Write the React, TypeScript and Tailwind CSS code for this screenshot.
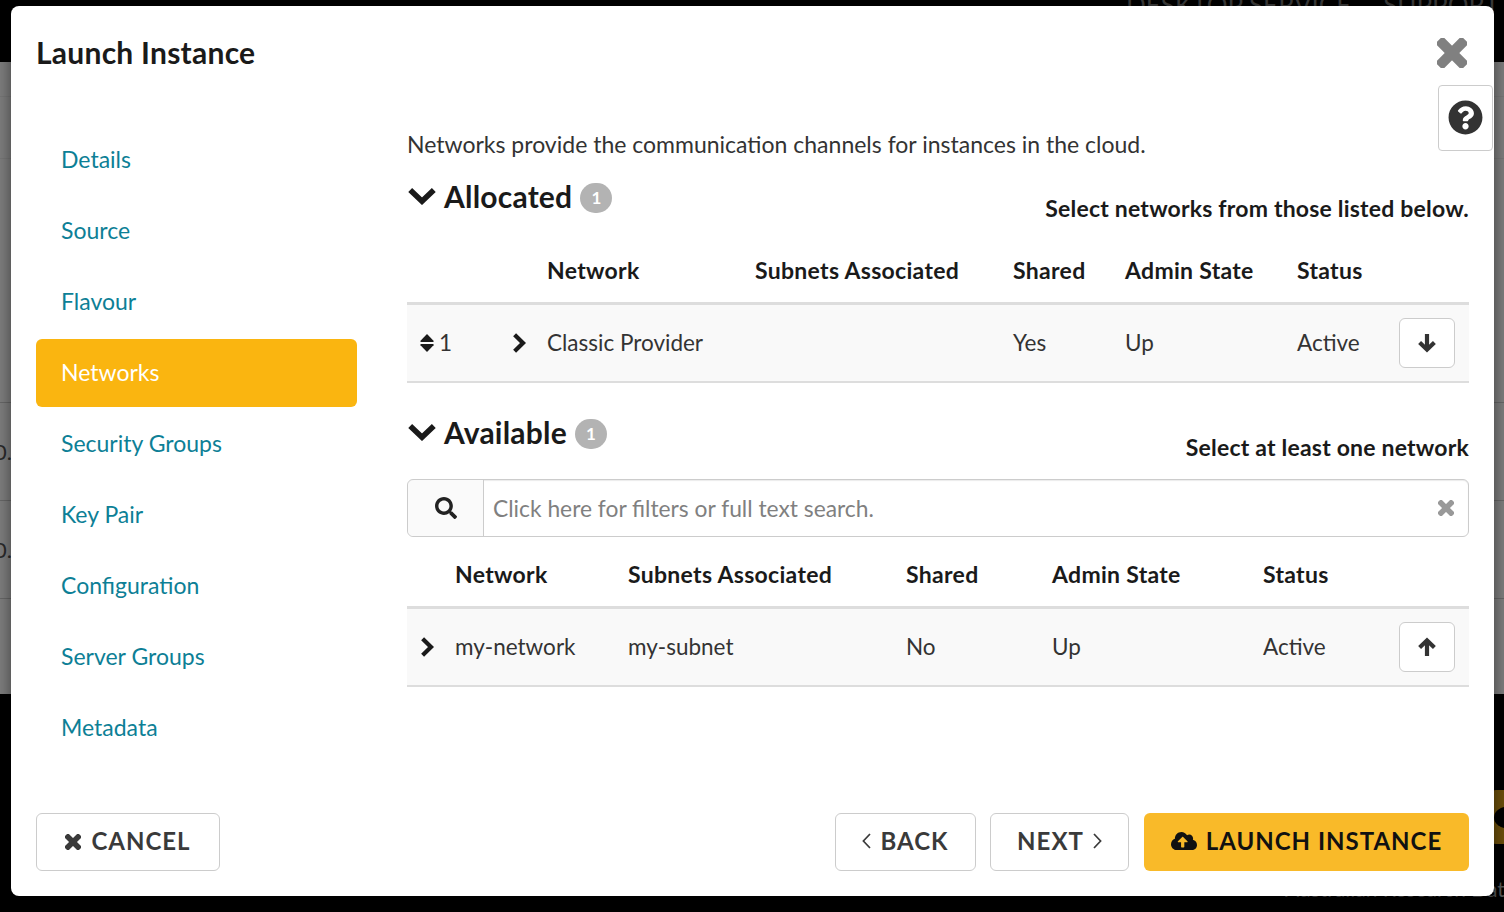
import React from "react";
import { FaQuestionCircle, FaSearch, FaCloudUploadAlt } from "react-icons/fa";

const steps = ["Details", "Source", "Flavour", "Networks", "Security Groups", "Key Pair", "Configuration", "Server Groups", "Metadata"];

function Cross({ className }: { className: string }) {
  return (
    <svg viewBox="0 0 30 30" className={className} fill="currentColor">
      <rect x="-3.5" y="9.8" width="37" height="10.4" rx="1.6" transform="rotate(45 15 15)" />
      <rect x="-3.5" y="9.8" width="37" height="10.4" rx="1.6" transform="rotate(-45 15 15)" />
    </svg>
  );
}

function ChevronD({ className }: { className: string }) {
  return (
    <svg viewBox="0 0 28 18" className={className} fill="none" stroke="currentColor" strokeWidth="5.6" strokeLinejoin="miter">
      <path d="M2.2 3 L14 14.2 L25.8 3" />
    </svg>
  );
}

function ChevronR({ className }: { className: string }) {
  return (
    <svg viewBox="0 0 15 20" className={className} fill="none" stroke="currentColor" strokeWidth="4.2" strokeLinejoin="miter">
      <path d="M2.6 1.8 L11 10 L2.6 18.2" />
    </svg>
  );
}

function Arrow({ up }: { up?: boolean }) {
  return (
    <svg viewBox="0 0 20 20" className={`w-[20px] h-[20px] text-[#333] ${up ? "rotate-180" : ""}`} fill="none" stroke="currentColor" strokeWidth="4.2">
      <path d="M10 1 V16" />
      <path d="M2.6 9.5 L10 16.5 L17.4 9.5" />
    </svg>
  );
}

function Sort() {
  return (
    <svg viewBox="0 0 14 20" className="w-[14px] h-[20px] text-[#1a1a1a]" fill="currentColor">
      <path d="M7 1 L13.5 7.8 Q14 9 13 9 H1 Q0 9 0.5 7.8 Z" />
      <path d="M7 19 L13.5 12.2 Q14 11 13 11 H1 Q0 11 0.5 12.2 Z" />
    </svg>
  );
}

function Angle({ right }: { right?: boolean }) {
  return (
    <svg viewBox="0 0 9 16" className={`w-[9px] h-[16px] ${right ? "rotate-180" : ""}`} fill="none" stroke="currentColor" strokeWidth="1.7">
      <path d="M8 1 L1.4 8 L8 15" />
    </svg>
  );
}

function Heading({ title, hint, hintClass }: { title: string; hint: string; hintClass: string }) {
  return (
    <div className="flex items-start justify-between">
      <div className="flex items-center h-[34px]">
        <ChevronD className="w-[28px] h-[18px] ml-[1px] text-[#1a1a1a]" />
        <span className="ml-[8px] text-[30px] tracking-[0.2px] font-bold text-[#1a1a1a] leading-[34px]">{title}</span>
        <span className="ml-[8px] mt-[3px] w-[32px] h-[30px] rounded-full bg-[#b3b3b3] text-white text-[17px] font-bold flex items-center justify-center">1</span>
      </div>
      <div className={`text-[23px] font-bold tracking-[0.2px] text-[#1a1a1a] leading-[28px] ${hintClass}`}>{hint}</div>
    </div>
  );
}

export default function App() {
  return (
    <div className="relative w-[1504px] h-[912px] overflow-hidden bg-black" style={{ fontFamily: "Lato, 'Open Sans', sans-serif" }}>
      <div className="h-[62px] bg-black text-[#3a3a3a] text-[26px] pl-[1126px] whitespace-nowrap leading-[14px] overflow-hidden">
        <span className="relative -top-[2px]">DESKTOP SERVICE</span>
        <span className="relative -top-[2px] ml-[32px]">SUPPORT</span>
      </div>
      <div className="h-[632px] bg-[#7d7d7d] flex flex-col">
        <div className="h-[35px] border-b border-[#767676]" />
        <div className="h-[62px] border-b border-[#767676]" />
        <div className="h-[244px] border-b border-[#666]" />
        <div className="h-[98px] border-b border-[#666] flex items-center text-[22px] text-[#2a2a2a] -ml-[6px]">0.</div>
        <div className="h-[98px] border-b border-[#666] flex items-center text-[22px] text-[#2a2a2a] -ml-[6px]">0.</div>
      </div>
      <div className="relative h-[218px] bg-black pl-[1285px] pt-[183px] text-[21px] leading-[24px] text-[#555] whitespace-nowrap">
        Australian Research Data
        <svg viewBox="0 0 12 54" className="absolute right-0 top-[96px] w-[12px] h-[54px]">
          <path d="M0 4 Q0 0 4 0 H12 V54 H4 Q0 54 0 50 Z" fill="#6b4e0a" />
          <ellipse cx="16" cy="27.5" rx="14" ry="11" fill="#000" />
        </svg>
      </div>

      <div className="absolute left-[11px] top-[6px] w-[1483px] h-[890px] bg-white rounded-[8px] flex flex-col text-[#333] shadow-[0_5px_15px_rgba(0,0,0,0.5)]">
        <div className="flex items-start justify-between h-[79px] pl-[25px]">
          <h1 className="mt-[29px] text-[30px] tracking-[0.25px] leading-[34px] font-bold text-[#1a1a1a]">Launch Instance</h1>
          <Cross className="mt-[32px] mr-[27px] w-[30px] h-[30px] text-[#808080]" />
        </div>
        <div className="flex flex-1 pl-[25px] relative">
          <aside className="w-[321px] flex flex-col gap-[3px] pt-[41px]">
            {steps.map((s) => (
              <div key={s} className={`h-[68px] pb-[2px] rounded-[6px] flex items-center pl-[25px] text-[23px] ${s === "Networks" ? "bg-[#fab510] text-white" : "text-[#0d7f96]"}`}>{s}</div>
            ))}
          </aside>
          <main className="ml-[50px] w-[1062px] pt-[44px]">
            <p className="text-[23px] leading-[30px] text-[#333]">Networks provide the communication channels for instances in the cloud.</p>
            <div className="mt-[20px]">
              <Heading title="Allocated" hint="Select networks from those listed below." hintClass="mt-[15px]" />
            </div>
            <table className="w-[1062px] table-fixed text-[22.5px] mt-[18px]">
              <colgroup>
                <col className="w-[92px]" /><col className="w-[48px]" /><col className="w-[208px]" /><col className="w-[258px]" /><col className="w-[112px]" /><col className="w-[172px]" /><col className="w-[172px]" />
              </colgroup>
              <thead>
                <tr className="h-[63px] border-b-[3px] border-[#ddd] text-left text-[23px] tracking-[0.3px] text-[#1a1a1a]">
                  <th /><th /><th className="font-bold pb-[2px]">Network</th><th className="font-bold pb-[2px]">Subnets Associated</th><th className="font-bold pb-[2px]">Shared</th><th className="font-bold pb-[2px]">Admin State</th><th className="font-bold pb-[2px]">Status</th>
                </tr>
              </thead>
              <tbody>
                <tr className="h-[79px] bg-[#f9f9f9] border-b-[2px] border-[#ddd]">
                  <td><div className="flex items-center pl-[13px]"><Sort /><span className="ml-[5px]">1</span></div></td>
                  <td><ChevronR className="w-[15px] h-[20px] ml-[13px] text-[#1a1a1a]" /></td>
                  <td>Classic Provider</td><td /><td>Yes</td><td>Up</td>
                  <td><div className="flex items-center justify-between pr-[14px]"><span>Active</span><button className="w-[56px] h-[50px] rounded-[6px] border border-[#ccc] bg-white flex items-center justify-center"><Arrow /></button></div></td>
                </tr>
              </tbody>
            </table>
            <div className="mt-[32px]">
              <Heading title="Available" hint="Select at least one network" hintClass="mt-[18px]" />
            </div>
            <div className="mt-[18px] h-[58px] flex rounded-[6px] border border-[#ccc] shadow-[inset_0_1px_1px_rgba(0,0,0,0.08)]">
              <div className="w-[76px] bg-[#fafafa] border-r border-[#ccc] rounded-l-[6px] flex items-center justify-center">
                <FaSearch className="w-[22px] h-[22px] text-[#222]" />
              </div>
              <div className="flex-1 flex items-center justify-between pl-[9px] pr-[14px] text-[22.8px] text-[#808080]">
                <span>Click here for filters or full text search.</span>
                <Cross className="w-[16px] h-[16px] text-[#999]" />
              </div>
            </div>
            <table className="w-[1062px] table-fixed text-[22.5px] mt-[7px]">
              <colgroup>
                <col className="w-[48px]" /><col className="w-[173px]" /><col className="w-[278px]" /><col className="w-[146px]" /><col className="w-[211px]" /><col className="w-[206px]" />
              </colgroup>
              <thead>
                <tr className="h-[63px] border-b-[3px] border-[#ddd] text-left text-[23px] tracking-[0.3px] text-[#1a1a1a]">
                  <th /><th className="font-bold pb-[2px]">Network</th><th className="font-bold pb-[2px]">Subnets Associated</th><th className="font-bold pb-[2px]">Shared</th><th className="font-bold pb-[2px]">Admin State</th><th className="font-bold pb-[2px]">Status</th>
                </tr>
              </thead>
              <tbody>
                <tr className="h-[79px] bg-[#f9f9f9] border-b-[2px] border-[#ddd]">
                  <td><ChevronR className="w-[15px] h-[20px] ml-[13px] text-[#1a1a1a]" /></td>
                  <td>my-network</td><td>my-subnet</td><td>No</td><td>Up</td>
                  <td><div className="flex items-center justify-between pr-[14px]"><span>Active</span><button className="w-[56px] h-[50px] rounded-[6px] border border-[#ccc] bg-white flex items-center justify-center"><Arrow up /></button></div></td>
                </tr>
              </tbody>
            </table>
          </main>
          <button className="absolute right-[1px] top-0 w-[55px] h-[66px] rounded-[4px] border border-[#ccc] bg-white flex items-center justify-center">
            <FaQuestionCircle className="w-[35px] h-[35px] text-[#333] -mt-[2px]" />
          </button>
        </div>
        <footer className="flex items-center justify-between h-[58px] mb-[25px] px-[25px] text-[24px] font-bold tracking-[1px]">
          <button className="w-[184px] h-[58px] pb-[2px] rounded-[6px] border border-[#ccc] flex items-center justify-center text-[#3a3a3a]"><Cross className="w-[16px] h-[16px] mr-[10px] mt-[2px]" />CANCEL</button>
          <div className="flex gap-[14px]">
            <button className="w-[141px] h-[58px] pb-[2px] rounded-[6px] border border-[#ccc] flex items-center justify-center gap-[9px] text-[#3a3a3a]"><Angle />BACK</button>
            <button className="w-[139px] h-[58px] pb-[2px] rounded-[6px] border border-[#ccc] flex items-center justify-center gap-[9px] text-[#3a3a3a]">NEXT<Angle right /></button>
            <button className="ml-[1px] w-[325px] h-[58px] pb-[2px] rounded-[6px] bg-[#f9ba29] flex items-center justify-center text-[#111]"><FaCloudUploadAlt className="w-[26px] h-[26px] mr-[9px]" />LAUNCH INSTANCE</button>
          </div>
        </footer>
      </div>
    </div>
  );
}
